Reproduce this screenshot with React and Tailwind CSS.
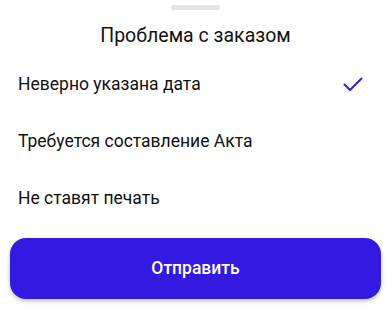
const options = [
  { id: 1, label: 'Неверно указана дата', checked: true },
  { id: 2, label: 'Требуется составление Акта', checked: false },
  { id: 3, label: 'Не ставят печать', checked: false },
];

const App = () => {
  return (
    <div className="w-[391px] h-[323px] bg-white overflow-hidden" style={{ fontFamily: 'Roboto, "Noto Sans", sans-serif' }}>
      <div className="flex justify-center pt-[5px]">
        <div className="w-[49px] h-[5px] rounded-full bg-[#e4e4e6]"></div>
      </div>
      <h2 className="mt-[12px] text-center text-[19.5px] leading-[28px] font-normal text-[#111]">Проблема с заказом</h2>
      <ul className="mt-[6px]">
        {options.map((o) => (
          <li key={o.id} className="h-[57px] flex items-center justify-between pl-[18px] pr-[28px]">
            <span className="text-[17.5px] text-[#111]">{o.label}</span>
            {o.checked && (
              <svg width="20" height="15" viewBox="0 0 20 15" fill="none">
                <path d="M1.5 7.5 L7 13 L18.5 1.5" stroke="#3419e0" strokeWidth="2" strokeLinecap="round" strokeLinejoin="round" />
              </svg>
            )}
          </li>
        ))}
      </ul>
      <div className="px-[10px] mt-[11px]">
        <button className="w-full h-[61px] rounded-[16px] bg-[#3419e0] text-white text-[17.5px] font-medium shadow-[0_2px_4px_rgba(0,0,0,0.25)]">
          Отправить
        </button>
      </div>
    </div>
  );
};

export default App;
